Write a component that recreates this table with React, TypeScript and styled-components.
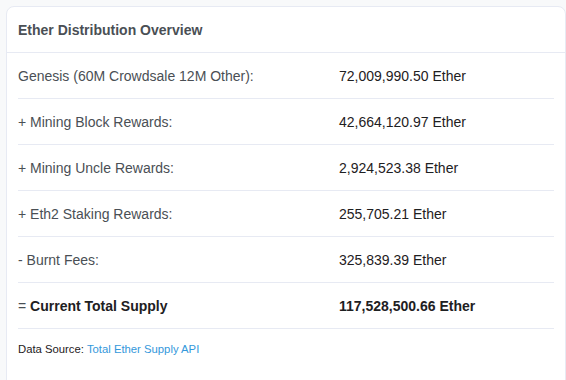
import React from "react";
import styled, { createGlobalStyle } from "styled-components";

const GlobalStyle = createGlobalStyle`
  body {
    margin: 0;
    background: #f8f9fa;
    font-family: "Liberation Sans", Arial, sans-serif;
  }
`;

const Page = styled.div`
  padding: 6px 0 0 6px;
  height: 380px;
  box-sizing: border-box;
  overflow: hidden;
`;

const Card = styled.div`
  width: 560px;
  background: #ffffff;
  border: 1px solid #e7eaf3;
  border-radius: 8px;
  box-sizing: border-box;
  min-height: 400px;
`;

const Header = styled.div`
  height: 46px;
  padding: 0 11px;
  display: flex;
  align-items: center;
  border-bottom: 1px solid #e7eaf3;
  box-sizing: border-box;
`;

const Title = styled.h2`
  margin: 0;
  font-size: 14px;
  font-weight: 700;
  color: #4a4f55;
`;

const Body = styled.div`
  padding: 0 11px;
`;

const Row = styled.div`
  display: grid;
  grid-template-columns: 321px 1fr;
  height: 46px;
  box-sizing: border-box;
  align-items: center;
  border-bottom: 1px solid #e7eaf3;
  font-size: 14px;
`;

const Label = styled.div`
  color: #4a4f55;
`;

const Value = styled.div<{ $strong?: boolean }>`
  color: #1e2022;
  font-weight: ${(p) => (p.$strong ? 700 : 400)};
`;

const Bold = styled.b`
  font-weight: 700;
  color: #1e2022;
`;

const Source = styled.p`
  margin: 0;
  padding: 14px 0;
  font-size: 11.3px;
  color: #1e2022;
`;

const Link = styled.a`
  color: #3498db;
  text-decoration: none;
`;

const rows = [
  { label: "Genesis (60M Crowdsale 12M Other):", value: "72,009,990.50 Ether" },
  { label: "+ Mining Block Rewards:", value: "42,664,120.97 Ether" },
  { label: "+ Mining Uncle Rewards:", value: "2,924,523.38 Ether" },
  { label: "+ Eth2 Staking Rewards:", value: "255,705.21 Ether" },
  { label: "- Burnt Fees:", value: "325,839.39 Ether" },
];

const App = () => {
  return (
    <Page>
      <GlobalStyle />
      <Card>
        <Header>
          <Title>Ether Distribution Overview</Title>
        </Header>
        <Body>
          {rows.map((row) => (
            <Row key={row.label}>
              <Label>{row.label}</Label>
              <Value>{row.value}</Value>
            </Row>
          ))}
          <Row>
            <Label>
              = <Bold>Current Total Supply</Bold>
            </Label>
            <Value $strong>117,528,500.66 Ether</Value>
          </Row>
          <Source>
            Data Source: <Link href="#">Total Ether Supply API</Link>
          </Source>
        </Body>
      </Card>
    </Page>
  );
};

export default App;
